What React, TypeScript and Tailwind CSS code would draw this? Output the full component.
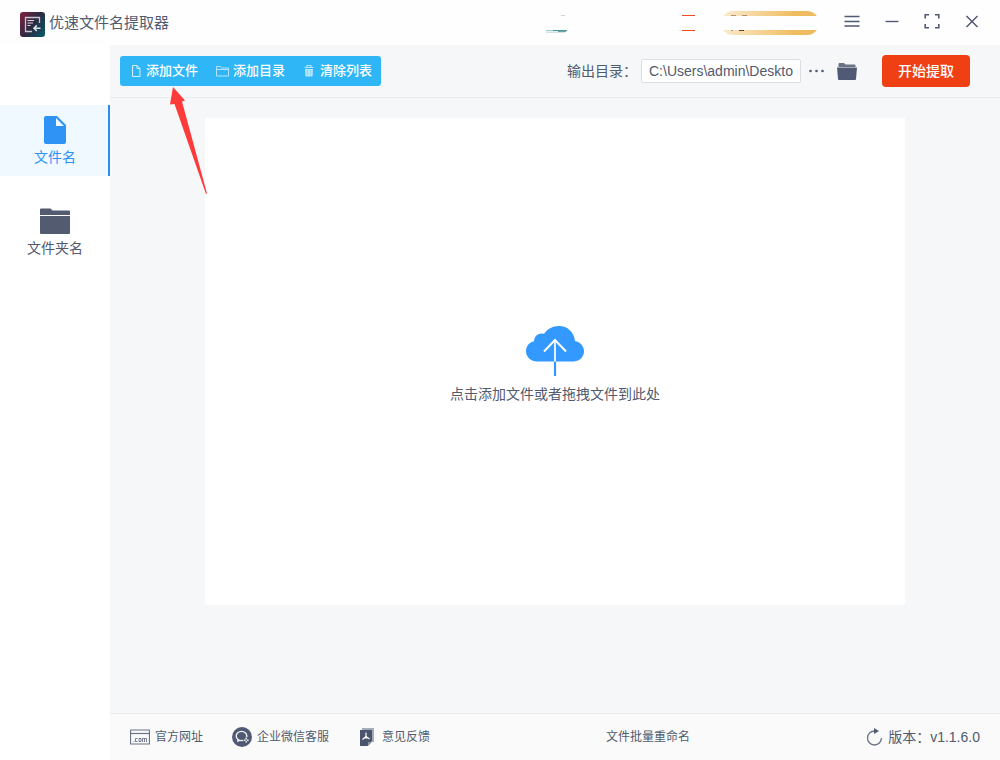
import React, { useState } from "react";

const TABS = [
  { id: "file", label: "文件名" },
  { id: "folder", label: "文件夹名" },
];

function AppLogo() {
  return (
    <svg className="h-[25px] w-[25px] shrink-0" viewBox="0 0 25 25" fill="none" aria-hidden="true">
      <defs>
        <linearGradient id="logo" x1="0" y1="4" x2="25" y2="21" gradientUnits="userSpaceOnUse">
          <stop offset="0" stopColor="#7a2140" />
          <stop offset="0.5" stopColor="#2b2a42" />
          <stop offset="1" stopColor="#0b5563" />
        </linearGradient>
      </defs>
      <rect width="25" height="25" rx="3" fill="url(#logo)" />
      <path d="M19.5 11V5.5h-14v14H12" stroke="#c9c4d0" strokeWidth="1.3" />
      <path d="M7.500 8.500H14M7.500 11H13M7.500 13.500h3" stroke="#dcd9e0" strokeWidth="1.2" />
      <path d="M20.500 16.200h-6M16.800 13.400 14 16.200l2.800 2.800" stroke="#dfe6ea" strokeWidth="1.5" />
    </svg>
  );
}

function AccountStrip() {
  return (
    <svg className="h-[45px] w-[276px] shrink-0" viewBox="0 0 276 45" aria-hidden="true">
      <defs>
        <linearGradient id="gold" x1="0" x2="1">
          <stop offset="0" stopColor="#fbebd0" />
          <stop offset="0.75" stopColor="#efbd60" />
          <stop offset="1" stopColor="#edb95c" />
        </linearGradient>
      </defs>
      <path d="M17 15h4v1h-4z" fill="#d0d4d6" />
      <path d="M2 30h7v1H2z" fill="#a9cdd0" />
      <path d="M9 30h14v1H9z" fill="#4f9498" />
      <path d="M2 31h13v1H2z" fill="#e2eff0" />
      <path d="M14 31h8v1h-8z" fill="#6ba5aa" />
      <path d="M2 32h19v1H2z" fill="#d3e3e5" />
      <path d="M138 15h13v1h-13zM138 30h13v1h-13z" fill="#ef4a22" />
      <rect x="177" y="11" width="98" height="24" rx="12" fill="url(#gold)" />
      <path d="M187 15h5v1h-5zM198 15h5v1h-5z" fill="#b18f72" />
      <path d="M187 30h2v1h-2z" fill="#b7977c" />
      <path d="M195 30h5v1h-5z" fill="#6b3a30" />
      <path d="M174 16h102v14H174z" fill="#fefefe" />
    </svg>
  );
}

function WindowButton({ label, children }: { label: string; children: React.ReactNode }) {
  return (
    <button aria-label={label} className="flex h-11 w-10 items-center justify-center">
      <svg className="h-4 w-4" viewBox="0 0 16 16" fill="none" stroke="#515a74" strokeWidth="1.4">
        {children}
      </svg>
    </button>
  );
}

function TitleBar() {
  return (
    <header className="flex h-[45px] items-center bg-[#fefefe] pr-2 pl-5">
      <div className="flex items-center gap-1">
        <div className="pt-1">
          <AppLogo />
        </div>
        <h1 className="text-[15px] leading-5">优速文件名提取器</h1>
      </div>
      <div className="ml-auto flex items-center">
        <AccountStrip />
        <div className="ml-3 flex pb-1">
          <WindowButton label="菜单">
            <path d="M.5 3.500h15M.5 8.500h15M.5 13h15" />
          </WindowButton>
          <WindowButton label="最小化">
            <path d="M1.500 8.500h13" />
          </WindowButton>
          <WindowButton label="最大化">
            <path d="M1.200 5.500V1.700h3.800M11 1.700h3.800v3.800M14.800 11v3.800H11M5 14.800H1.200V11" strokeWidth="1.600" />
          </WindowButton>
          <WindowButton label="关闭">
            <path d="m2.500 3 11 11M13.500 3l-11 11" strokeWidth="1.500" />
          </WindowButton>
        </div>
      </div>
    </header>
  );
}

function FileTabIcon() {
  return (
    <svg className="h-7 w-[22px]" viewBox="0 0 22 28" aria-hidden="true">
      <path d="M2 0h11l9 9v17a2 2 0 0 1-2 2H2a2 2 0 0 1-2-2V2a2 2 0 0 1 2-2z" fill="#2f93f6" />
      <path d="M12 2v8h8z" fill="#f0f9ff" />
    </svg>
  );
}

function FolderTabIcon() {
  return (
    <svg className="h-7 w-[30px]" viewBox="0 0 30 28" fill="#535b70" aria-hidden="true">
      <path d="M0 2.500a1 1 0 0 1 1-1h9.500l2 2H29a1 1 0 0 1 1 1V8H0z" />
      <path d="M0 9h30v17a1 1 0 0 1-1 1H1a1 1 0 0 1-1-1z" />
    </svg>
  );
}

function Sidebar() {
  const [active, setActive] = useState("file");

  return (
    <nav className="flex w-[110px] shrink-0 flex-col gap-5 bg-white pt-[60px]">
      {TABS.map((t) => (
        <button
          key={t.id}
          onClick={() => setActive(t.id)}
          className={`flex h-[71px] flex-col items-center gap-[3px] border-r-2 pt-[11px] pl-0.5 text-sm ${
            active === t.id ? "border-[#2f8bee] bg-[#f0f9ff] text-[#2f93f6]" : "border-transparent"
          }`}
        >
          {t.id === "file" ? <FileTabIcon /> : <FolderTabIcon />}
          <span className="leading-5">{t.label}</span>
        </button>
      ))}
    </nav>
  );
}

function SmallFolder() {
  return (
    <svg className="h-[17px] w-5" viewBox="0 0 20 17" fill="#515a74" aria-hidden="true">
      <path d="M1.500 1a1 1 0 0 1 1-1H7l1.500 1.500h9a1 1 0 0 1 1 1V4h-17z" opacity=".85" />
      <path d="M0 4.500h20l-1 11.500a1 1 0 0 1-1 1H2a1 1 0 0 1-1-1z" />
    </svg>
  );
}

function Toolbar() {
  const [outDir, setOutDir] = useState("C:\\Users\\admin\\Desktop");

  return (
    <div className="flex h-[53px] items-center border-b border-[#e9ebef] pr-[30px] pl-[10px]">
      <div className="flex h-[30px] items-center gap-4 rounded-[3px] bg-[#2eb6f6] pr-[9px] pl-[11px] text-[13px] font-medium text-white">
        <button className="flex items-center gap-1">
          <svg className="h-[14px] w-[11px]" viewBox="0 0 11 14" fill="none" stroke="#d5f0fd" aria-hidden="true">
            <path d="M1.500 1.500h4.500l3 3v8h-7.500zM6 1.500v3h3" />
          </svg>
          添加文件
        </button>
        <button className="flex items-center gap-[3px] pl-px">
          <svg className="h-3 w-[15px]" viewBox="0 0 15 12" fill="none" stroke="#b5e5fc" aria-hidden="true">
            <path d="M1.500 1.500h4l1 1.500h7v8h-12zM1.500 4.500h12" />
          </svg>
          添加目录
        </button>
        <button className="flex items-center gap-[5px] pl-0.5">
          <svg className="h-3 w-3" viewBox="0 0 12 12" fill="none" stroke="#b5e5fc" aria-hidden="true">
            <path d="M1.500 2.500h9M4 2V.500h4V2" strokeWidth="1.200" />
            <path d="M2 4h8l-.500 7.500h-7z" fill="#b5e5fc" stroke="none" />
            <path d="M4.500 5v5M7.500 5v5" stroke="#7dd0f9" strokeWidth=".8" />
          </svg>
          清除列表
        </button>
      </div>

      <div className="ml-auto flex items-center">
        <label htmlFor="outdir" className="text-sm">
          输出目录：
        </label>
        <input
          id="outdir"
          value={outDir}
          onChange={(e) => setOutDir(e.target.value)}
          className="ml-1 h-6 w-40 rounded-[2px] border border-[#dcdee2] bg-white px-[7px] text-sm outline-none"
        />
        <button aria-label="更多" className="ml-2 flex h-6 w-4 items-center">
          <svg className="h-1 w-4" viewBox="0 0 16 4" fill="#515a74">
            <circle cx="1.500" cy="2" r="1.300" />
            <circle cx="7.500" cy="2" r="1.300" />
            <circle cx="13.500" cy="2" r="1.300" />
          </svg>
        </button>
        <button aria-label="打开目录" className="ml-3">
          <SmallFolder />
        </button>
        <button className="ml-[25px] h-8 w-[88px] rounded bg-[#ef4014] text-sm font-medium text-white">开始提取</button>
      </div>
    </div>
  );
}

function DropZone() {
  return (
    <button className="mx-auto mt-5 flex h-[487px] w-full max-w-[700px] flex-col items-center justify-center gap-2 bg-white pt-1.5">
      <svg className="h-[50px] w-[58px]" viewBox="0 0 58 50" fill="none" aria-hidden="true">
        <path
          d="M10 35.500C4.500 35 0 30.800 0 25.300 0 20 3.500 16 8 15.200 8.500 9.500 13 6.500 18 8 21 3 26.500 0 33 0c8.500 0 15 6 16 15 5 .8 9 5 9 10.300 0 5.500-4 9.700-10 10.200z"
          fill="#3399ff"
        />
        <path d="M29 35.500V50" stroke="#3399ff" strokeWidth="2.200" />
        <path d="M29 15v20.500" stroke="#e3f1ff" strokeWidth="2" />
        <path d="M18 25.500 29 14l11 11.500" stroke="#fff" strokeWidth="2" />
      </svg>
      <span className="text-sm leading-5">点击添加文件或者拖拽文件到此处</span>
    </button>
  );
}

function Footer() {
  return (
    <footer className="mt-auto flex h-[47px] items-center border-t border-[#e9ebef] bg-[#fafafa] px-5 text-xs">
      <div className="flex items-center">
        <a href="#site" className="flex items-center gap-[5px]">
          <svg className="h-4 w-5" viewBox="0 0 20 16" fill="none" stroke="#6b7388" aria-hidden="true">
            <rect x=".5" y="1" width="19" height="14" rx=".5" strokeWidth="1.200" />
            <path d="M0 4.500h20" strokeWidth="1.200" />
            <path
              d="M3.500 12.500h1M7.500 9.500h-2v3h2M9 9.500h2v3H9zM12.500 13V9.500h4V13M14.500 9.500V13"
              strokeWidth=".9"
            />
          </svg>
          官方网址
        </a>
        <a href="#service" className="ml-[29px] flex items-center gap-[5px]">
          <svg className="h-5 w-5" viewBox="0 0 20 20" fill="none" aria-hidden="true">
            <circle cx="10" cy="10" r="10" fill="#515a74" />
            <ellipse cx="9.500" cy="9" rx="5.300" ry="4.600" stroke="#f2f3f5" strokeWidth="1.400" />
            <path d="m5.500 12-.5 3.200 3.500-1.500z" fill="#f2f3f5" />
            <circle cx="14.200" cy="13.200" r="3" fill="#515a74" />
            <path d="M14.200 10.800v1.600M14.200 14v1.600M11.800 13.200h1.600M15 13.200h1.600" stroke="#f2f3f5" strokeWidth="1.500" />
          </svg>
          企业微信客服
        </a>
        <a href="#feedback" className="ml-[30px] flex items-center gap-[7px]">
          <svg className="h-[18px] w-4" viewBox="0 0 16 18" aria-hidden="true">
            <path d="M3 0h12v14h-2V2H3z" fill="#a5abb9" />
            <path d="M1 2h12v11l-4.500 5H1z" fill="#4b546d" />
            <path d="M9 18v-4h4z" fill="#8c93a5" />
            <path d="M7 4.500v4L3.500 11.500M7 8.500l3.500 2.500M5 10h4" stroke="#fff" strokeWidth="1.200" fill="none" />
          </svg>
          意见反馈
        </a>
      </div>
      <a href="#rename" className="mx-auto">
        文件批量重命名
      </a>
      <button className="flex items-center gap-1 text-sm">
        <svg className="h-[18px] w-[18px]" viewBox="0 0 18 18" fill="none" aria-hidden="true">
          <path d="M9 3A7 7 0 1 0 15.500 10" stroke="#6b7388" strokeWidth="1.300" />
          <path d="m8 0 5 3-5 3z" fill="#515a74" />
        </svg>
        <span>版本：v1.1.6.0</span>
      </button>
    </footer>
  );
}

export default function App() {
  return (
    <div className="relative flex min-h-screen flex-col bg-white font-['Liberation_Sans','Noto_Sans_CJK_SC',sans-serif] text-[#515a6e]">
      <TitleBar />
      <div className="flex flex-1">
        <Sidebar />
        <main className="flex min-w-0 flex-1 flex-col bg-[#f5f7f9]">
          <Toolbar />
          <DropZone />
          <Footer />
        </main>
      </div>

      {/* hint arrow pointing at the add-file button */}
      <svg
        className="pointer-events-none absolute top-[86px] left-[168px] h-[110px] w-10"
        viewBox="0 0 40 110"
        fill="#ff3a3a"
        aria-hidden="true"
      >
        <path d="M5 1 17 14.500 14 15.500 39 107.500 38 108 6.500 18 2 18.500z" />
      </svg>
    </div>
  );
}
